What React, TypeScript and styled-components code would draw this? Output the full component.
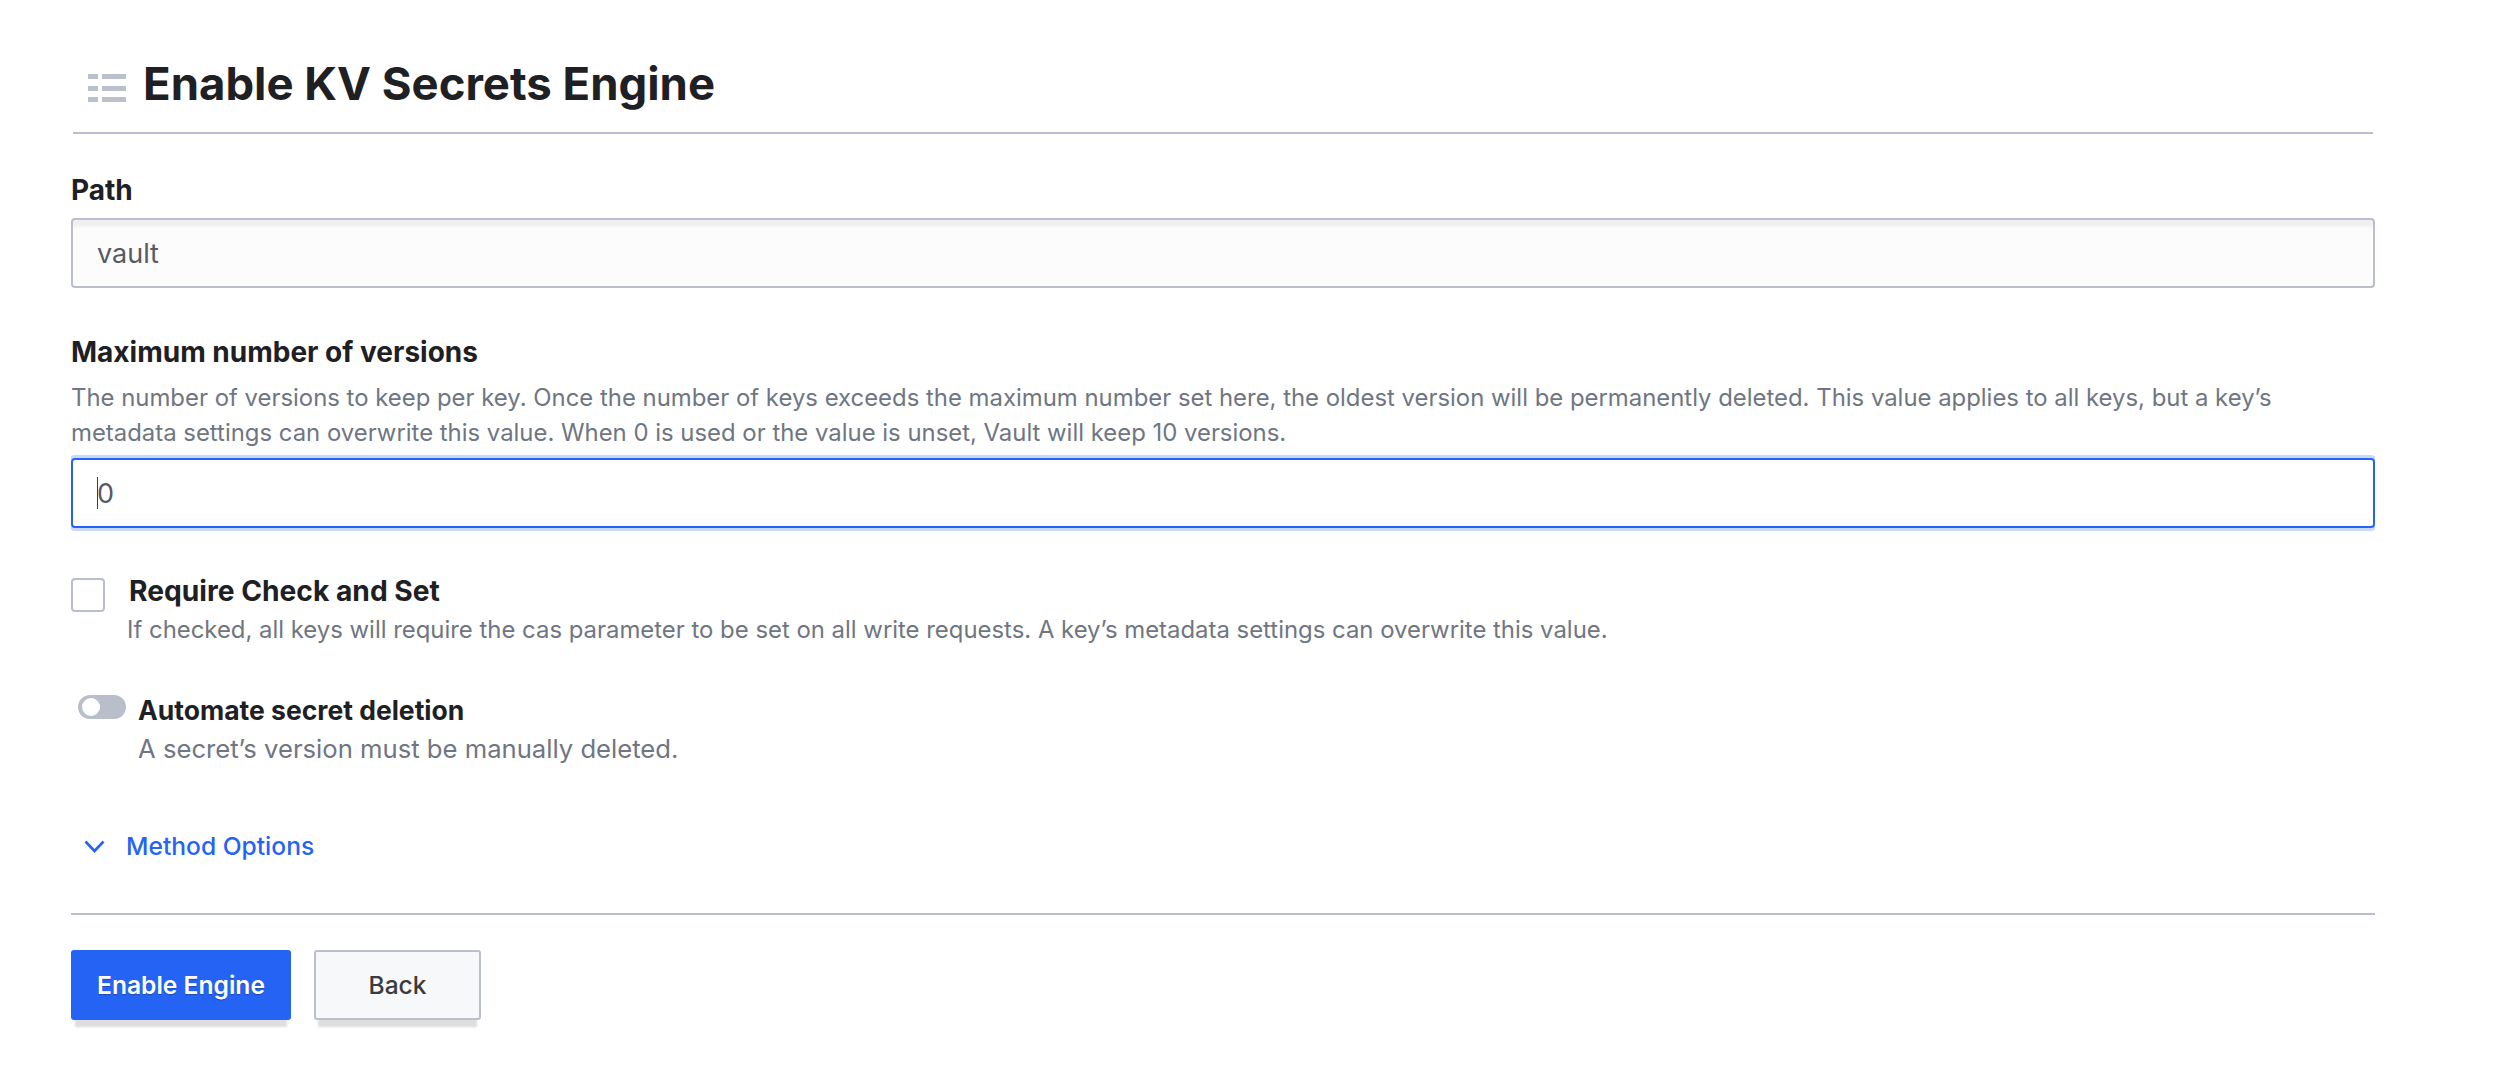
import styled, { createGlobalStyle } from "styled-components";

const GlobalStyle = createGlobalStyle`
  body {
    margin: 0;
    background: #fff;
    font-family: Inter, "Liberation Sans", sans-serif;
    color: #1f2023;
  }
`;

const App = () => {
  return (
    <>
      <GlobalStyle />
      <Page>
        <Header>
          <ListIcon width="38" height="28" viewBox="0 0 38 28">
            <rect x="0" y="0" width="10" height="5" />
            <rect x="14" y="0" width="24" height="5" />
            <rect x="0" y="12" width="10" height="5" />
            <rect x="14" y="12" width="24" height="5" />
            <rect x="0" y="23" width="10" height="5" />
            <rect x="14" y="23" width="24" height="5" />
          </ListIcon>
          <Title>Enable KV Secrets Engine</Title>
        </Header>

        <Label>Path</Label>
        <Field>vault</Field>

        <VersionsLabel>Maximum number of versions</VersionsLabel>
        <Help>
          The number of versions to keep per key. Once the number of keys exceeds the maximum number set here, the oldest version will be permanently deleted. This value applies to all keys, but a key’s
          <br />
          metadata settings can overwrite this value. When 0 is used or the value is unset, Vault will keep 10 versions.
        </Help>
        <Field $focused>
          <Caret />0
        </Field>

        <CheckRow>
          <Checkbox />
          <CheckLabel>Require Check and Set</CheckLabel>
        </CheckRow>
        <CheckHelp>If checked, all keys will require the cas parameter to be set on all write requests. A key’s metadata settings can overwrite this value.</CheckHelp>

        <ToggleRow>
          <Toggle>
            <Knob />
          </Toggle>
          <ToggleLabel>Automate secret deletion</ToggleLabel>
        </ToggleRow>
        <ToggleHelp>A secret’s version must be manually deleted.</ToggleHelp>

        <OptionsRow>
          <svg width="21" height="13" viewBox="0 0 21 13" fill="none" stroke="#2563f5" strokeWidth="2.6">
            <path d="M1.5 1.5 L10.5 11 L19.5 1.5" />
          </svg>
          <OptionsText>Method Options</OptionsText>
        </OptionsRow>

        <Divider />

        <Actions>
          <PrimaryButton>Enable Engine</PrimaryButton>
          <BackButton>Back</BackButton>
        </Actions>
      </Page>
    </>
  );
};

export default App;

const Page = styled.div`
  width: 2304px;
  height: 1082px;
  box-sizing: border-box;
  margin-left: 71px;
  padding-top: 56px;
  overflow: hidden;
`;

const Header = styled.div`
  display: flex;
  align-items: flex-start;
  gap: 17px;
  height: 76px;
  padding-left: 15px;
  margin: 0 2px;
  border-bottom: 2px solid #bbbfcc;
`;

const ListIcon = styled.svg`
  fill: #bac1cc;
  margin-top: 18px;
`;

const Title = styled.h1`
  margin: 1px 0 0;
  font-size: 45.5px;
  line-height: 54px;
  font-weight: 700;
  color: #1f2023;
`;

const Label = styled.div`
  margin: 37px 0 9px;
  height: 38px;
  font-size: 28px;
  line-height: 38px;
  font-weight: 700;
`;

const VersionsLabel = styled(Label)`
  margin: 46px 0 0;
  height: 36px;
  line-height: 36px;
`;

const Field = styled.div<{ $focused?: boolean }>`
  position: relative;
  height: 70px;
  box-sizing: border-box;
  padding-left: 24px;
  font-size: 27px;
  line-height: 68px;
  color: #565a63;
  background: ${(p) => (p.$focused ? "#fff" : "linear-gradient(#f0f0f0 0 5px, #fcfcfc 9px)")};
  border-radius: 4px;
  border: 2px solid ${(p) => (p.$focused ? "#2563f5" : "#bbbfcc")};
  box-shadow: ${(p) => (p.$focused ? "0 0 0 3px #c9d8fc" : "none")};
`;

const Caret = styled.span`
  position: absolute;
  left: 24px;
  top: 17px;
  width: 1px;
  height: 32px;
  background: #3a3f4a;
`;

const Help = styled.div`
  margin-top: 10px;
  margin-bottom: 8px;
  font-size: 23.9px;
  line-height: 35px;
  color: #6f7682;
`;

const CheckRow = styled.div`
  display: flex;
  align-items: flex-start;
  gap: 24px;
  margin-top: 50px;
`;

const Checkbox = styled.div`
  width: 34px;
  height: 34px;
  box-sizing: border-box;
  background: #fff;
  border: 2px solid #bbbfcc;
  border-radius: 4px;
`;

const CheckLabel = styled.div`
  font-size: 28.2px;
  line-height: 26px;
  font-weight: 700;
`;

const CheckHelp = styled(Help)`
  margin: 0 0 0 56px;
`;

const ToggleRow = styled.div`
  display: flex;
  align-items: flex-start;
  gap: 12px;
  margin: 48px 0 0 7px;
`;

const Toggle = styled.div`
  display: flex;
  align-items: center;
  width: 48px;
  height: 24px;
  padding-left: 4px;
  box-sizing: border-box;
  background: #b8bfca;
  border-radius: 12px;
`;

const Knob = styled.div`
  width: 18px;
  height: 18px;
  background: #fff;
  border-radius: 50%;
`;

const ToggleLabel = styled.div`
  font-size: 26.5px;
  line-height: 30px;
  font-weight: 700;
`;

const ToggleHelp = styled(Help)`
  margin: 6px 0 0 67px;
  font-size: 25.65px;
`;

const OptionsRow = styled.div`
  display: flex;
  align-items: center;
  gap: 21px;
  margin: 65px 0 0 13px;
  height: 30px;
`;

const OptionsText = styled.div`
  font-size: 24.6px;
  line-height: 30px;
  font-weight: 500;
  color: #2563f5;
`;

const Divider = styled.div`
  height: 2px;
  margin-top: 52px;
  background: #bbbfcc;
`;

const Actions = styled.div`
  display: flex;
  gap: 23px;
  margin-top: 35px;
`;

const PrimaryButton = styled.div`
  width: 220px;
  height: 70px;
  display: flex;
  align-items: center;
  justify-content: center;
  font-size: 24.6px;
  font-weight: 600;
  color: #fff;
  background: #2563f5;
  border-radius: 3px;
  text-shadow: 0 1px 1px rgba(0, 0, 0, 0.25);
  box-shadow: 0 11px 2px -4px #dedede;
`;

const BackButton = styled(PrimaryButton)`
  width: 167px;
  box-sizing: border-box;
  font-size: 24.5px;
  font-weight: 500;
  color: #3a3b40;
  background: #f6f8fa;
  border: 2px solid #bbbfcc;
  text-shadow: none;
`;
